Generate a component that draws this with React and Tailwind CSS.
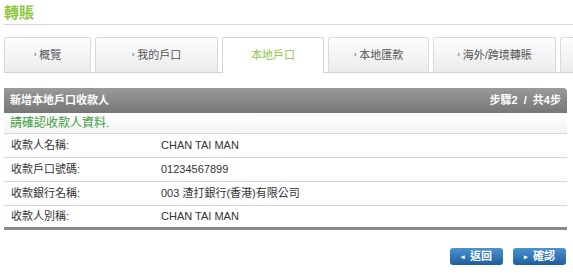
import React from "react";

const TABS = [
  { label: "概覽", w: "w-[87px]" },
  { label: "我的戶口", w: "w-[123px]" },
  { label: "本地戶口", w: "w-[102px]", active: true },
  { label: "本地匯款", w: "w-[101px]" },
  { label: "海外/跨境轉賬", w: "w-[123px]" },
  { label: "", w: "w-[40px]" },
];

const ROWS = [
  ["收款人名稱:", "CHAN TAI MAN"],
  ["收款戶口號碼:", "01234567899"],
  ["收款銀行名稱:", "003 渣打銀行(香港)有限公司"],
  ["收款人別稱:", "CHAN TAI MAN"],
];

export default function App() {
  return (
    <div
      className="w-[573px] h-[274px] overflow-hidden bg-white text-[#333] text-[11px]"
      style={{ fontFamily: '"Liberation Sans", Arial, "Noto Sans CJK TC", sans-serif' }}
    >
      {/* title */}
      <div className="pl-[4px] pt-[4px]">
        <div className="h-[20px] text-[15px] font-bold leading-[18px] text-[#8dc63f]">轉賬</div>
        <div className="h-px bg-[#d9d9d9]" />
      </div>

      {/* tabs */}
      <div className="mt-[12px] ml-[4px] flex gap-[4px] border-b border-[#d4d4d4] w-[700px]">
        {TABS.map((t, i) => (
          <div
            key={i}
            className={`${t.w} shrink-0 h-[35px] flex items-center justify-center border border-b-0 rounded-t-[2px] ${
              t.active
                ? "bg-white border-[#d4d4d4] text-[#8dc63f] -mb-px h-[36px]"
                : "bg-gradient-to-b from-[#fdfdfd] to-[#ececec] border-[#dadada] text-[#555]"
            }`}
          >
            {t.label && !t.active && <span className="text-[#1a5a96] text-[8px] mr-[3px]">›</span>}
            {t.label}
          </div>
        ))}
      </div>

      {/* panel */}
      <div className="mt-[15px] ml-[4px] w-[563px]">
        <div className="h-[25px] flex items-center justify-between px-[6px] rounded-tr-[4px] bg-gradient-to-b from-[#9a9a9a] to-[#767676] text-white font-bold">
          <span>新增本地戶口收款人</span>
          <span className="whitespace-pre">步驟2  /  共4步</span>
        </div>
        <div className="h-[21px] flex items-center px-[6px] bg-gradient-to-b from-white to-[#f4f4f4] border-b border-[#d6d6d6] text-[#3a9e3a] text-[12px]">
          請確認收款人資料.
        </div>
        {ROWS.map(([k, v], i) => (
          <div
            key={i}
            className={`h-[24px] flex items-center ${
              i === ROWS.length - 1 ? "border-b-[3px] border-[#8a8a8a]" : "border-b border-[#d6d6d6]"
            }`}
          >
            <span className="w-[157px] pl-[7px]">{k}</span>
            <span>{v}</span>
          </div>
        ))}
      </div>

      {/* buttons */}
      <div className="mt-[18px] w-[566px] flex justify-end gap-[10px]">
        {[
          ["◂", "返回"],
          ["▸", "確認"],
        ].map(([a, l]) => (
          <button
            key={l}
            className="w-[53px] h-[17px] rounded-[3px] bg-gradient-to-b from-[#4a93cf] to-[#1d5e9b] text-white font-bold text-[11px] flex items-center justify-center gap-[5px] leading-none"
          >
            <span className="text-[7px]">{a}</span>
            {l}
          </button>
        ))}
      </div>
    </div>
  );
}
